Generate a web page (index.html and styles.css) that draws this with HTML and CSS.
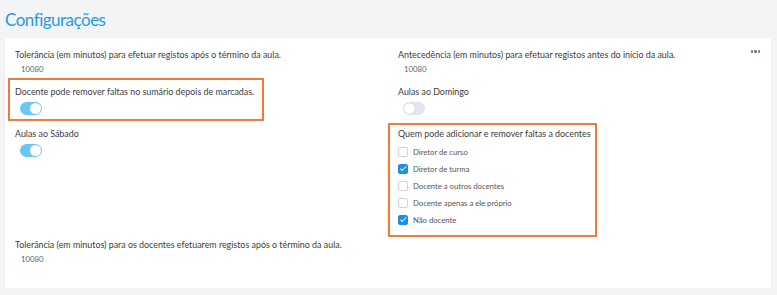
FILE: index.html
```html
<!DOCTYPE html>
<html lang="pt">
<head>
    <meta charset="UTF-8">
    <meta name="viewport" content="width=device-width, initial-scale=1.0">
    <title>Configurações</title>
    <link rel="stylesheet" href="styles.css">
</head>
<body>
    <h1 class="page-title">Configurações</h1>

    <section class="settings-card">
        <button class="more-button" aria-label="Mais opções" title="Mais opções">
            <span></span><span></span><span></span>
        </button>

        <div class="settings-grid">
            <div class="field">
                <div class="field-label">Tolerância (em minutos) para efetuar registos após o término da aula.</div>
                <div class="field-value">10080</div>
            </div>
            <div class="field">
                <div class="field-label">Antecedência (em minutos) para efetuar registos antes do início da aula.</div>
                <div class="field-value">10080</div>
            </div>

            <div class="field highlight highlight-left">
                <div class="field-label">Docente pode remover faltas no sumário depois de marcadas.</div>
                <div class="toggle on"></div>
            </div>
            <div class="field field-offset">
                <div class="field-label">Aulas ao Domingo</div>
                <div class="toggle"></div>
            </div>

            <div class="field field-saturday">
                <div class="field-label">Aulas ao Sábado</div>
                <div class="toggle on"></div>
            </div>
            <div class="field highlight highlight-right">
                <div class="field-label">Quem pode adicionar e remover faltas a docentes</div>
                <ul class="check-list">
                    <li><span class="checkbox"></span>Diretor de curso</li>
                    <li><span class="checkbox checked"></span>Diretor de turma</li>
                    <li><span class="checkbox"></span>Docente a outros docentes</li>
                    <li><span class="checkbox"></span>Docente apenas a ele próprio</li>
                    <li><span class="checkbox checked"></span>Não docente</li>
                </ul>
            </div>

            <div class="field field-wide">
                <div class="field-label">Tolerância (em minutos) para os docentes efetuarem registos após o término da aula.</div>
                <div class="field-value">10080</div>
            </div>
        </div>
    </section>
</body>
</html>
```

FILE: styles.css
```css
body {
  margin: 0;
  background: #f2f4f5;
  font-family: Lato, "Open Sans", sans-serif;
  color: #3b3b3b;
}

.page-title {
  margin: 0;
  padding: 8px 0 0 5px;
  height: 30px;
  font-size: 17px;
  font-weight: 400;
  letter-spacing: -0.5px;
  line-height: 24px;
  color: #1e9ce8;
}

.settings-card {
  position: relative;
  margin: 0 6px 0 5px;
  padding: 10px 10px 23px 10px;
  background: #fff;
  box-shadow: 0 1px 2px rgba(0, 0, 0, 0.08);
}

.more-button {
  position: absolute;
  top: 12px;
  right: 11px;
  display: flex;
  gap: 1px;
  padding: 0;
  background: transparent;
  border: none;
  cursor: pointer;
}

.more-button span {
  width: 2.5px;
  height: 2.5px;
  border-radius: 50%;
  background: #6e7480;
}

.settings-grid {
  display: grid;
  grid-template-columns: 383px 1fr;
  align-items: start;
}

.field-label {
  font-size: 8.9px;
  line-height: 14px;
  white-space: nowrap;
}

.field-value {
  margin-top: 1px;
  padding-left: 6px;
  font-size: 7.8px;
  line-height: 12px;
  color: #666;
}

.highlight {
  box-sizing: border-box;
  border: 2px solid #ee7b3a;
}

.highlight-left {
  width: 256px;
  margin: 3px 0 0 -7px;
  padding: 5px 5px 4px 5px;
}

.field-offset {
  margin-top: 10px;
}

.field-saturday {
  margin-top: 6px;
}

.highlight-right {
  width: 209px;
  margin: 2px 0 0 -10px;
  padding: 2px 8px 7px 8px;
}

.field-wide {
  grid-column: 1 / 3;
  padding-top: 1px;
}

.toggle {
  position: relative;
  box-sizing: border-box;
  width: 22px;
  height: 13px;
  margin: 3px 0 0 5px;
  border-radius: 7px;
  background: #e3e6ee;
}

.toggle::after {
  content: "";
  position: absolute;
  top: 1px;
  left: 1px;
  width: 11px;
  height: 11px;
  border-radius: 50%;
  background: #fff;
  box-shadow: 0 0 1px rgba(0, 0, 0, 0.35);
}

.toggle.on {
  background: #68c8f3;
}

.toggle.on::after {
  left: 10px;
  box-shadow: none;
}

.check-list {
  list-style: none;
  margin: 2px 0 0 0;
  padding: 0;
}

.check-list li {
  display: flex;
  align-items: center;
  height: 17px;
  font-size: 7.7px;
  color: #555;
}

.checkbox {
  position: relative;
  box-sizing: border-box;
  width: 10px;
  height: 10px;
  margin-right: 5px;
  border: 1px solid #cfd3da;
  border-radius: 2px;
  background: #fff;
}

.checkbox.checked {
  border-color: #1e8fe6;
  background: #1e8fe6;
}

.checkbox.checked::after {
  content: "";
  position: absolute;
  left: 2.5px;
  top: 0.5px;
  width: 2px;
  height: 4.5px;
  border: solid #fff;
  border-width: 0 1.2px 1.2px 0;
  transform: rotate(45deg);
}
```
